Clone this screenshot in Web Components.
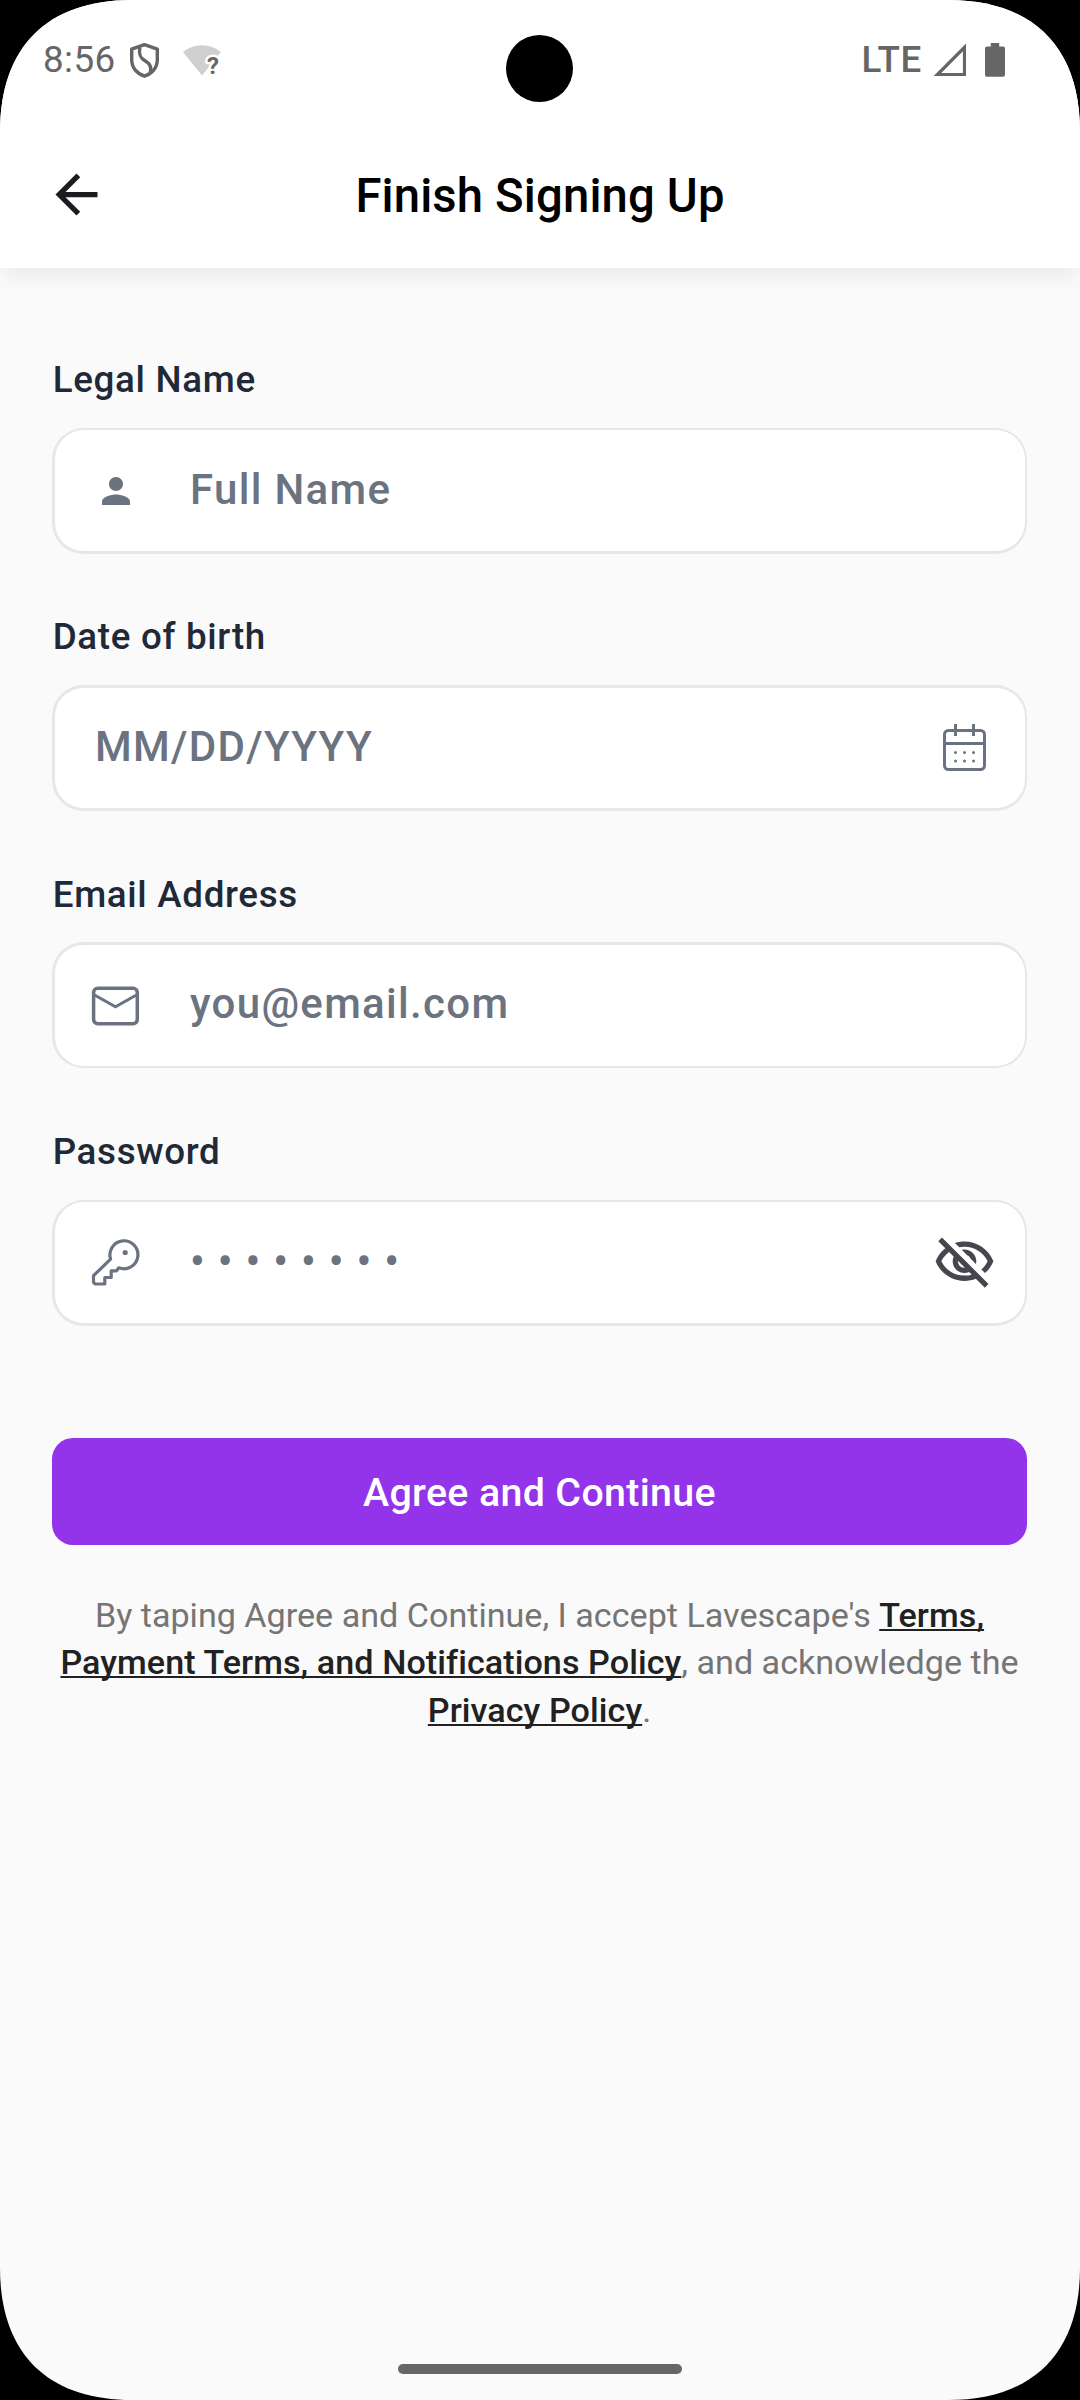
<!DOCTYPE html>
<html lang="en">
<head>
<meta charset="utf-8">
<title>Finish Signing Up</title>
<style>
html,body{margin:0;padding:0;background:#000}
body{font-family:Roboto,"Liberation Sans",sans-serif}
</style>
</head>
<body>
<signup-screen></signup-screen>

<template id="status-bar-t">
<style>
:host{display:flex;justify-content:space-between;height:122px;box-sizing:border-box;padding:0 75px 0 43px;color:#666;background:#fff}
.side{display:flex;align-items:flex-start;height:100%}
.time{font-size:36.75px;line-height:44px;letter-spacing:.45px;margin-top:38px;width:81px;white-space:nowrap}
.lte{font-size:36.75px;line-height:44px;font-weight:500;letter-spacing:.6px;margin-top:38px;width:71.5px}
svg{display:block;flex:none}
</style>
<div class="side">
  <span class="time">8:56</span>
  <svg width="42" height="42" viewBox="124 40 42 42" style="margin:40px 15px 0 0" fill="none" stroke="#666" stroke-width="3.4" stroke-linejoin="round">
    <path d="M144.5 44.6 L157.3 49.2 V60 C157.3 67.6 151.8 74 144.5 76.2 C137.2 74 131.7 67.6 131.7 60 V49.2 Z"/>
    <path d="M139.8 47.6 C138.6 54.6 140.2 58 145 60.8 C149.8 63.6 151.8 66.4 150.2 72.6"/>
  </svg>
  <svg width="42" height="42" viewBox="181 40 42 42" style="margin-top:40px">
    <path fill="#cfcfcf" d="M183 51.9 C194 43.1 210 43.1 220.9 51.9 L202 75.5 Z"/>
    <g font-family="Roboto" font-weight="700" font-size="24"><text x="207" y="74" fill="#666" stroke="#fff" stroke-width="5" stroke-linejoin="round" paint-order="stroke">?</text></g>
  </svg>
</div>
<div class="side">
  <span class="lte">LTE</span>
  <svg width="34" height="36" viewBox="933 42 34 36" style="margin-top:42px"><path fill="#666" fill-rule="evenodd" d="M933.6 76 L966 43.4 V76 Z M941.3 73 H962.9 V51.2 Z"/></svg>
  <svg width="20" height="36" viewBox="985 42 20 36" style="margin:42px 0 0 18px"><path fill="#666" d="M990.8 43 H999.2 V46.4 H1003 a2 2 0 0 1 2 2 V74.7 a2 2 0 0 1 -2 2 H987 a2 2 0 0 1 -2 -2 V48.4 a2 2 0 0 1 2 -2 H990.8 Z"/></svg>
</div>
</template>

<template id="app-header-t">
<style>
:host{display:grid;grid-template-columns:63px 1fr 63px;align-items:center;height:146px;box-sizing:border-box;padding:0 45px;background:#fff;box-shadow:0 10.5px 20px -3px rgba(0,0,0,.065);clip-path:inset(0 0 -60px 0)}
svg{display:block;width:63px;height:63px;margin-top:-1px}
h1{margin:2px 0 0;font-size:47.25px;line-height:56px;font-weight:500;letter-spacing:.14px;text-align:center;color:#000;white-space:nowrap}
</style>
<svg viewBox="0 0 24 24"><path fill="#1c1b1f" d="M20 11H7.83l5.59-5.59L12 4l-8 8 8 8 1.41-1.41L7.83 13H20v-2z"/></svg>
<h1><slot></slot></h1>
</template>

<template id="form-field-t">
<style>
:host{display:block}
label{display:block;height:43px;line-height:calc(43px + var(--label-drop,0px));margin:0 0 27px .7px;font-size:36.75px;font-weight:500;letter-spacing:.68px;color:#1f2937;white-space:nowrap}
.box{display:flex;align-items:center;height:126px;box-sizing:border-box;background:#fff;border:solid #e5e7eb;border-width:var(--bt,3px) 2px var(--bb,3px) 3px;border-radius:31.5px}
.text{flex:1;font-size:42px;line-height:50px;font-weight:500;letter-spacing:1.31px;color:#6b7280;white-space:pre;padding-bottom:var(--text-lift,3px);padding-left:40px}
:host([lead]) .text{padding-left:0}
.lead{display:none;width:135px;flex:none}
:host([lead]) .lead{display:block}
::slotted(svg){display:block}
</style>
<label></label>
<div class="box"><span class="lead"><slot name="lead"></slot></span><span class="text"></span><slot name="trail"></slot></div>
</template>

<template id="primary-button-t">
<style>
:host{display:flex;align-items:center;justify-content:center;height:107px;background:#9333ea;border-radius:21px;color:#fff;font-size:39.375px;line-height:46px;font-weight:500;letter-spacing:.34px}
span{margin-top:3px}
</style>
<span><slot></slot></span>
</template>

<template id="legal-note-t">
<style>
:host{display:block;text-align:center;font-size:34.125px;line-height:47.4px;color:#757575}
div{white-space:nowrap}
b{font-weight:500;letter-spacing:.07px;color:#212121;text-decoration:underline;text-decoration-thickness:2px;text-underline-offset:2px;text-decoration-skip-ink:none}
</style>
<div>By taping Agree and Continue, I accept Lavescape's <b>Terms,</b></div>
<div><b>Payment Terms, and Notifications Policy</b>, and acknowledge the</div>
<div><b>Privacy Policy</b>.</div>
</template>

<template id="signup-screen-t">
<style>
:host{display:flex;flex-direction:column;position:relative;width:1080px;height:2400px;overflow:hidden;background:#fafafa;clip-path:path("M0 132C0 47 47 0 132 0H948C1033 0 1080 47 1080 132V2268C1080 2353 1033 2400 948 2400H132C47 2400 0 2353 0 2268Z")}
main{display:flex;flex-direction:column;flex:1;padding:89.9px 53px 0 52px}
form-field{height:196px;margin-bottom:61.25px}
primary-button{margin-top:50.8px}
legal-note{margin:47px 0 0}
.camera{position:absolute;left:506px;top:35px;width:67px;height:67px;border-radius:50%;background:#000}
.home{width:284px;height:10px;border-radius:5px;background:#666;margin:0 auto 26px}
app-header{position:relative}
</style>
<status-bar></status-bar>
<app-header>Finish Signing Up</app-header>
<main>
  <form-field lead label="Legal Name" placeholder="Full Name" style="--bt:2px;--text-lift:1px">
    <svg slot="lead" width="42" height="42" viewBox="0 0 24 24" style="margin-left:39.6px;margin-top:1px"><path fill="#6b7280" d="M12 12c2.21 0 4-1.79 4-4s-1.79-4-4-4-4 1.79-4 4 1.79 4 4 4zm0 2c-2.67 0-8 1.34-8 4v2h16v-2c0-2.66-5.33-4-8-4z"/></svg>
  </form-field>
  <form-field label="Date of birth" placeholder="MM/DD/YYYY">
    <svg slot="trail" width="48" height="52" viewBox="940 722 48 52" style="margin-right:37px" fill="none" stroke="#6b7280" stroke-width="3">
      <rect x="944.5" y="730.5" width="40" height="39" rx="4"/><path d="M944.5 743.5 H984.5 M955.5 724 V736 M973.5 724 V736"/>
      <path stroke-linecap="round" d="M955.5 752.4h.01 M964.5 752.4h.01 M973.5 752.4h.01 M955.5 761h.01 M964.5 761h.01 M973.5 761h.01"/>
    </svg>
  </form-field>
  <form-field lead label="Email Address" placeholder="you@email.com" style="--bb:2px;--label-drop:2px">
    <svg slot="lead" width="50" height="42" viewBox="90 984.5 50 42" style="margin-left:35px" fill="none" stroke="#6b7280" stroke-width="3.5">
      <rect x="93.6" y="987.7" width="43.7" height="35.6" rx="4.2"/><path stroke-width="3" d="M93.6 994 L115.5 1006.3 L137.3 994"/>
    </svg>
  </form-field>
  <form-field lead label="Password" placeholder="• • • • • • • •" style="--bt:2px;--text-lift:1px">
    <svg slot="lead" width="50" height="50" viewBox="90 1237.5 50 50" style="margin-left:35px" fill="none" stroke="#6b7280" stroke-width="3.2" stroke-linejoin="round">
      <path d="M110.6 1259.6 A14 14 0 1 1 118.8 1268.3 L116.5 1271.3 H111.2 V1278 H104.8 V1284.5 H95.3 L93.5 1282.8 V1276.2 Z"/>
      <circle cx="125.2" cy="1253" r="2.6" fill="#6b7280" stroke="none"/>
    </svg>
    <svg slot="trail" width="63" height="63" viewBox="0 0 24 24" style="margin-right:29px"><path fill="#49454f" d="M12 6c3.79 0 7.17 2.13 8.82 5.5-.59 1.22-1.42 2.27-2.41 3.12l1.41 1.41c1.39-1.23 2.49-2.77 3.18-4.53C21.27 7.11 17 4 12 4c-1.27 0-2.49.2-3.64.57l1.65 1.65C10.66 6.09 11.32 6 12 6zm-1.07 1.14L13 9.21c.57.25 1.03.71 1.28 1.28l2.07 2.07c.08-.34.14-.7.14-1.07C16.5 9.01 14.48 7 12 7c-.37 0-.72.05-1.07.14zM2.01 3.87l2.68 2.68C3.06 7.83 1.77 9.53 1 11.5 2.73 15.89 7 19 12 19c1.52 0 2.98-.29 4.32-.82l3.42 3.42 1.41-1.41L3.42 2.45 2.01 3.87zm7.5 7.5l2.61 2.61c-.04.01-.08.02-.12.02-1.38 0-2.5-1.12-2.5-2.5 0-.05.01-.08.01-.13zm-3.4-3.4l1.75 1.75c-.23.55-.36 1.15-.36 1.78 0 2.48 2.02 4.5 4.5 4.5.63 0 1.23-.13 1.77-.36l.98.98c-.88.24-1.8.38-2.75.38-3.79 0-7.17-2.13-8.82-5.5.7-1.43 1.72-2.61 2.93-3.53z"/></svg>
  </form-field>
  <primary-button>Agree and Continue</primary-button>
  <legal-note></legal-note>
</main>
<div class="home"></div>
<div class="camera"></div>
</template>

<script>
function define(name, setup) {
  customElements.define(name, class extends HTMLElement {
    constructor() {
      super();
      const root = this.attachShadow({ mode: 'open' });
      root.append(document.getElementById(name + '-t').content.cloneNode(true));
    }
    connectedCallback() { if (setup) setup(this, this.shadowRoot); }
  });
}
define('status-bar');
define('app-header');
define('form-field', (el, root) => {
  root.querySelector('label').textContent = el.getAttribute('label');
  root.querySelector('.text').textContent = el.getAttribute('placeholder');
});
define('primary-button');
define('legal-note');
define('signup-screen');
</script>
</body>
</html>
